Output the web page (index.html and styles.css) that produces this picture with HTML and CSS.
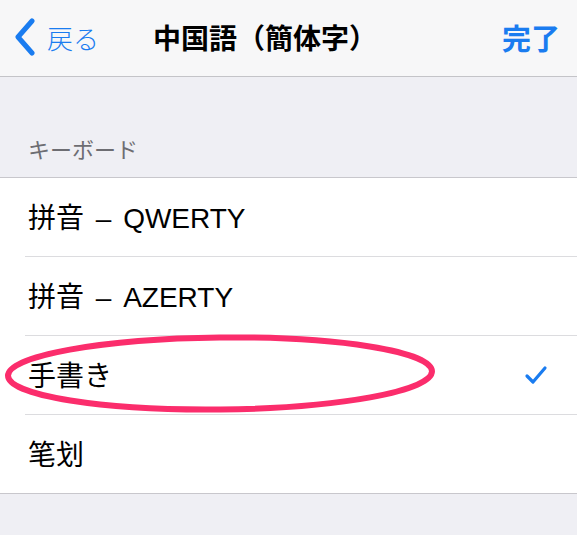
FILE: index.html
```html
<!DOCTYPE html>
<html lang="ja">
<head>
<meta charset="utf-8">
<link rel="stylesheet" href="styles.css">
</head>
<body>
<div class="nav">
  <div class="back">
    <svg class="chev" width="22" height="38" viewBox="0 0 22 38"><path d="M18 3 L4 19 L18 35" fill="none" stroke="#1a7cf0" stroke-width="5" stroke-linecap="round" stroke-linejoin="round"/></svg>
    <span class="back-label">戻る</span>
  </div>
  <div class="title">中国語（簡体字）</div>
  <div class="done">完了</div>
</div>
<div class="section-header">キーボード</div>
<div class="list">
  <div class="row"><span class="label">拼音 – QWERTY</span></div>
  <div class="row"><span class="label">拼音 – AZERTY</span></div>
  <div class="row selected">
    <span class="label">手書き</span>
    <svg class="check" width="24" height="20" viewBox="0 0 24 20"><path d="M3 11 L9 17 L21 3" fill="none" stroke="#1a7cf0" stroke-width="3.2" stroke-linecap="round" stroke-linejoin="round"/></svg>
    <svg class="circle" width="440" height="86" viewBox="0 0 440 86"><ellipse cx="220" cy="41.5" rx="212" ry="36" fill="none" stroke="#fb2d6c" stroke-width="6" transform="rotate(-0.6 220 41.5)"/></svg>
  </div>
  <div class="row"><span class="label">笔划</span></div>
</div>
</body>
</html>
```
FILE: styles.css
```css
html, body {
  margin: 0;
  padding: 0;
}
body {
  background: #efeff4;
  font-family: "Liberation Sans", "Noto Sans CJK JP", sans-serif;
  width: 577px;
  height: 535px;
  overflow: hidden;
}
.nav {
  height: 77px;
  box-sizing: border-box;
  background: #f7f7f8;
  border-bottom: 1px solid #c4c4c8;
  display: flex;
  align-items: center;
  padding: 0 17px 0 14px;
}
.back {
  display: flex;
  align-items: center;
  color: #1a7cf0;
  font-size: 26px;
  margin-top: -2px;
}
.chev {
  display: block;
  margin-right: 11px;
}
.back-label {
  font-family: "Noto Sans CJK JP", sans-serif;
  font-weight: 300;
}
.title {
  margin-left: 54px;
  font-family: "Noto Sans CJK JP", sans-serif;
  font-weight: 700;
  font-size: 28px;
  color: #000;
  margin-top: -2px;
}
.done {
  margin-left: auto;
  font-family: "Noto Sans CJK JP", sans-serif;
  font-weight: 700;
  font-size: 29px;
  color: #1a7cf0;
  margin-top: -2px;
}
.section-header {
  height: 100px;
  box-sizing: border-box;
  padding: 56px 0 0 28px;
  font-family: "Noto Sans CJK JP", sans-serif;
  font-size: 22px;
  color: #6d6d72;
  line-height: 30px;
}
.list {
  background: #fff;
  border-top: 1px solid #c8c7cc;
  border-bottom: 1px solid #c8c7cc;
}
.row {
  position: relative;
  height: 78px;
  display: flex;
  align-items: center;
  padding-left: 28px;
  padding-right: 28px;
}
.row + .row::before {
  content: "";
  position: absolute;
  top: -1px;
  left: 25px;
  right: 0;
  height: 1px;
  background: #dcdcdf;
}
.row + .row {
  margin-top: 1px;
}
.label {
  font-size: 28px;
  color: #000;
  font-weight: 400;
  word-spacing: 4px;
  margin-top: -3px;
}
.check {
  margin-left: auto;
  margin-right: 1px;
  display: block;
}
.circle {
  position: absolute;
  left: 0;
  top: -4px;
  pointer-events: none;
}
```
